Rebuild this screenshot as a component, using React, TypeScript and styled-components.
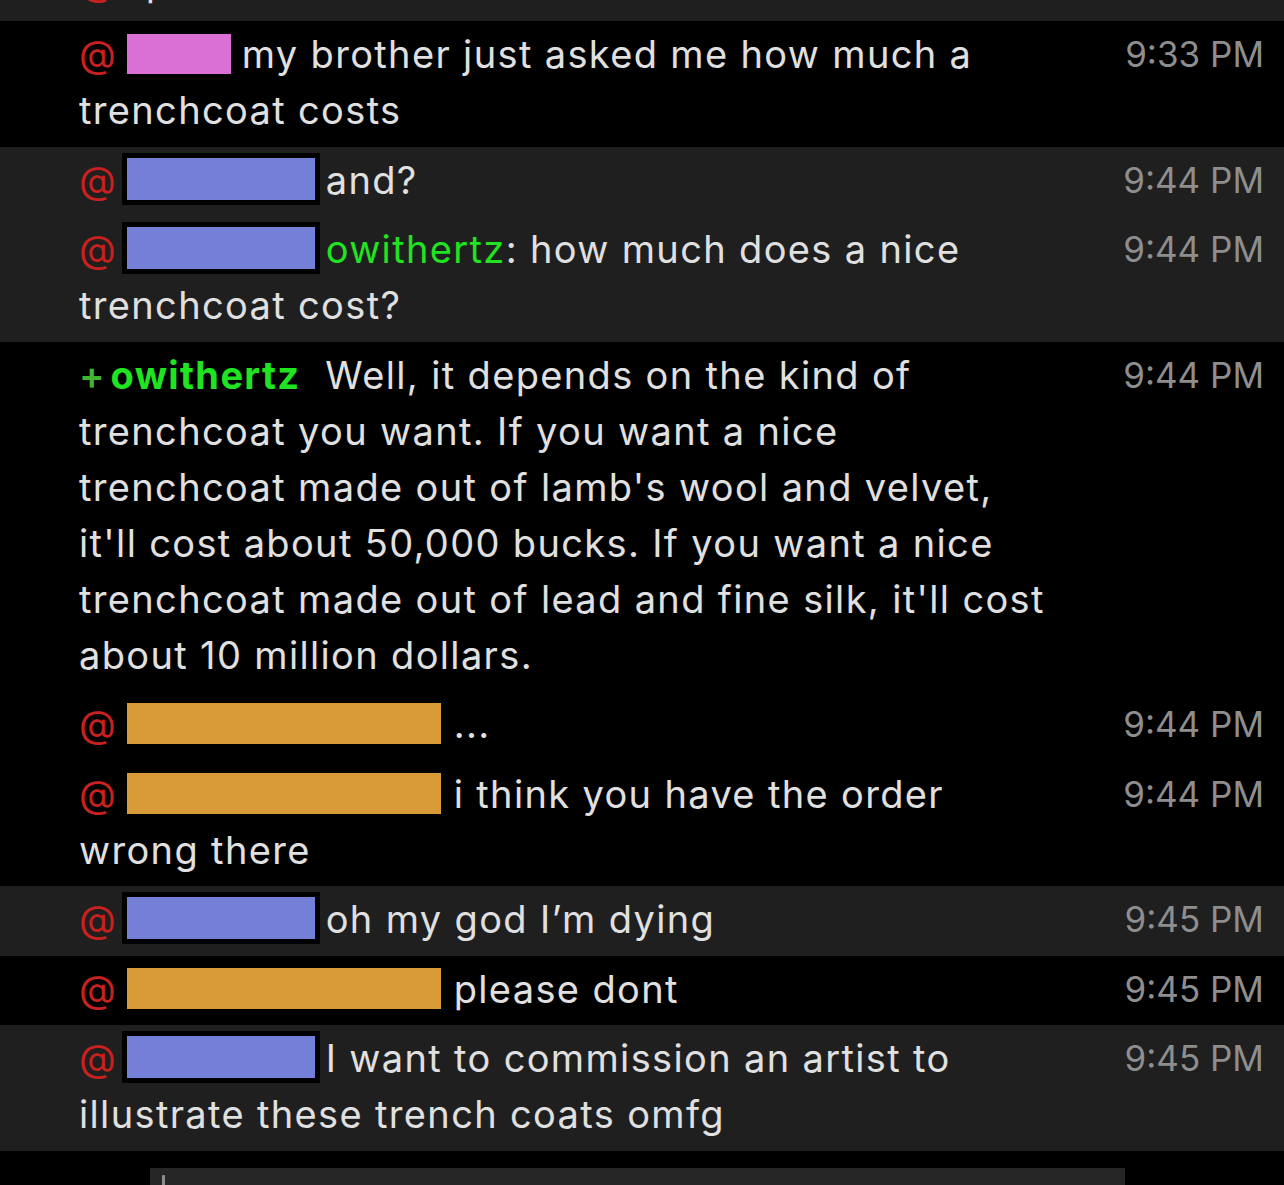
import React from "react";
import styled, { createGlobalStyle } from "styled-components";

const GlobalStyle = createGlobalStyle`
  html, body {
    margin: 0;
    padding: 0;
    background: #000;
    overflow: hidden;
  }
  body {
    font-family: Inter, "Noto Sans", "Liberation Sans", sans-serif;
    -webkit-font-smoothing: antialiased;
  }
`;

const Log = styled.div`
  display: flex;
  flex-direction: column;
  width: 1284px;
`;

const Row = styled.div<{ $shade: "gray" | "black" }>`
  display: flex;
  align-items: flex-start;
  padding: 5px 20px 8.5px 79px;
  background: ${(p) => (p.$shade === "gray" ? "#1f1f1f" : "#000")};
`;

const ClippedRow = styled.div`
  height: 21px;
  overflow: hidden;
  background: #1f1f1f;
  padding-left: 79px;
`;

const ClippedInner = styled.div`
  margin-top: -46px;
`;

const Body = styled.div`
  flex: 1;
  min-width: 0;
  font-size: 38px;
  line-height: 56px;
  letter-spacing: 1.35px;
  color: #e0e0e0;
  white-space: pre;
`;

const At = styled.span`
  color: #c8211f;
  letter-spacing: 0;
  margin-right: 6px;
`;

const Redact = styled.span<{ $fill: string; $w: number; $h: number; $gap: number }>`
  display: inline-block;
  box-sizing: border-box;
  width: ${(p) => p.$w}px;
  height: ${(p) => p.$h}px;
  background: ${(p) => p.$fill};
  border: 5px solid #000;
  vertical-align: -11px;
  margin-right: ${(p) => p.$gap}px;
`;

const Nick = styled.span`
  color: #1fe41f;
`;

const Plus = styled.span`
  color: #3fb52e;
  font-weight: 600;
  letter-spacing: 0;
  margin-right: 6px;
`;

const BoldNick = styled.span`
  color: #1fe41f;
  font-weight: 700;
  margin-right: 25px;
`;

const Time = styled.div`
  flex: none;
  font-size: 35px;
  line-height: 56px;
  color: #8e8e8e;
  text-align: right;
  margin-left: 20px;
`;

const Footer = styled.div`
  background: #000;
  padding: 17px 0 0 150px;
`;

const InputBox = styled.div`
  width: 975px;
  height: 60px;
  background: #262626;
  padding: 7px 0 0 12px;
  box-sizing: border-box;
`;

const Caret = styled.div`
  width: 3px;
  height: 30px;
  border-radius: 1px;
  background: #8c8c8c;
`;

type Tag = "pink" | "blue" | "orange";

const boxes: Record<Tag, { fill: string; w: number; h: number; gap: number }> = {
  pink: { fill: "#da6fd5", w: 114, h: 50, gap: 6 },
  blue: { fill: "#7480d8", w: 198, h: 52, gap: 6 },
  orange: { fill: "#d99a38", w: 324, h: 51, gap: 8 },
};

const Mention = ({ tag }: { tag: Tag }) => {
  const b = boxes[tag];
  return (
    <>
      <At>@</At>
      <Redact $fill={b.fill} $w={b.w} $h={b.h} $gap={b.gap} />
    </>
  );
};

type Msg = {
  shade: "gray" | "black";
  time: string;
  content: React.ReactNode;
};

const messages: Msg[] = [
  {
    shade: "black",
    time: "9:33 PM",
    content: (
      <>
        <Mention tag="pink" />
        {"my brother just asked me how much a\ntrenchcoat costs"}
      </>
    ),
  },
  {
    shade: "gray",
    time: "9:44 PM",
    content: (
      <>
        <Mention tag="blue" />
        and?
      </>
    ),
  },
  {
    shade: "gray",
    time: "9:44 PM",
    content: (
      <>
        <Mention tag="blue" />
        <Nick>owithertz</Nick>
        {": how much does a nice\ntrenchcoat cost?"}
      </>
    ),
  },
  {
    shade: "black",
    time: "9:44 PM",
    content: (
      <>
        <Plus>+</Plus>
        <BoldNick>owithertz</BoldNick>
        {
          "Well, it depends on the kind of\ntrenchcoat you want. If you want a nice\ntrenchcoat made out of lamb's wool and velvet,\nit'll cost about 50,000 bucks. If you want a nice\ntrenchcoat made out of lead and fine silk, it'll cost\nabout 10 million dollars."
        }
      </>
    ),
  },
  {
    shade: "black",
    time: "9:44 PM",
    content: (
      <>
        <Mention tag="orange" />
        ...
      </>
    ),
  },
  {
    shade: "black",
    time: "9:44 PM",
    content: (
      <>
        <Mention tag="orange" />
        {"i think you have the order\nwrong there"}
      </>
    ),
  },
  {
    shade: "gray",
    time: "9:45 PM",
    content: (
      <>
        <Mention tag="blue" />
        oh my god I’m dying
      </>
    ),
  },
  {
    shade: "black",
    time: "9:45 PM",
    content: (
      <>
        <Mention tag="orange" />
        please dont
      </>
    ),
  },
  {
    shade: "gray",
    time: "9:45 PM",
    content: (
      <>
        <Mention tag="blue" />
        {"I want to commission an artist to\nillustrate these trench coats omfg"}
      </>
    ),
  },
];

export default function App() {
  return (
    <>
      <GlobalStyle />
      <Log>
        <ClippedRow>
          <ClippedInner>
            <Body>
              <At>@</At>
              {"  p"}
            </Body>
          </ClippedInner>
        </ClippedRow>
        {messages.map((m, i) => (
          <Row key={i} $shade={m.shade}>
            <Body>{m.content}</Body>
            <Time>{m.time}</Time>
          </Row>
        ))}
        <Footer>
          <InputBox>
            <Caret />
          </InputBox>
        </Footer>
      </Log>
    </>
  );
}
